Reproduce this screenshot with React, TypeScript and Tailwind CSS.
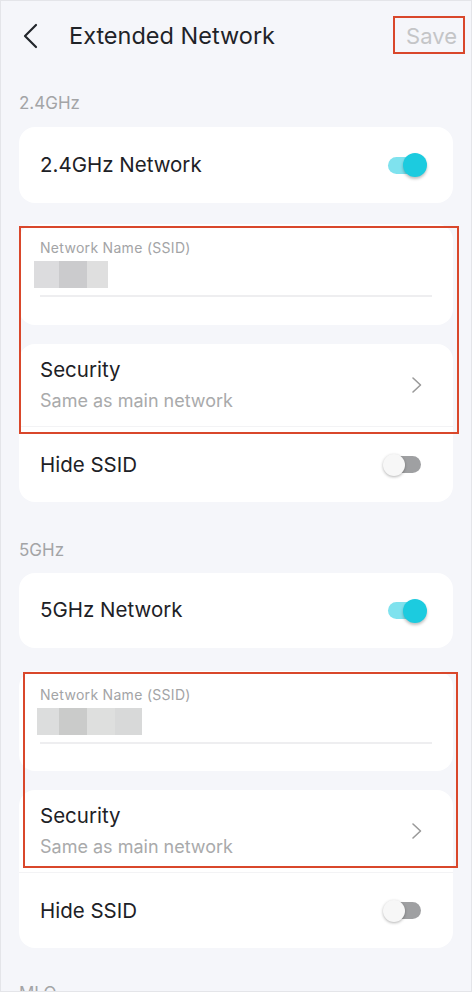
import React from "react";

const font = { fontFamily: "Inter, 'Noto Sans', sans-serif" };

type Block = { w: number; color: string };

function Toggle({ on }: { on: boolean }) {
  if (on) {
    return (
      <div className="relative w-[40px] h-[24px] flex items-center">
        <div className="absolute left-[1px] w-[34px] h-[17px] rounded-full bg-[#7fe2ee]" />
        <div className="absolute right-0 w-[24px] h-[24px] rounded-full bg-[#1ccbdf] shadow-[0_2px_3px_rgba(0,0,0,0.25)]" />
      </div>
    );
  }
  return (
    <div className="relative w-[38px] h-[24px] flex items-center">
      <div className="absolute right-0 w-[32px] h-[17px] rounded-full bg-[#9fa0a2]" />
      <div className="absolute left-0 w-[22px] h-[22px] rounded-full bg-[#f7f7f7] shadow-[0_1px_3px_rgba(0,0,0,0.3)]" />
    </div>
  );
}

function Chevron() {
  return (
    <svg width="12" height="18" viewBox="0 0 12 18" fill="none">
      <path d="M2 2l7.5 7L2 16" stroke="#9a9a9a" strokeWidth="1.6" strokeLinecap="round" strokeLinejoin="round" />
    </svg>
  );
}

function SwitchCard({ label, className }: { label: string; className: string }) {
  return (
    <div className={`mx-[18px] bg-white rounded-2xl flex items-center justify-between pl-[21px] pr-[26px] ${className}`}>
      <span className="text-[20.5px] text-[#1d2126]">{label}</span>
      <Toggle on />
    </div>
  );
}

// ssid value is masked with grey blocks
function SsidCard({ blocks, offset, className }: { blocks: Block[]; offset: string; className: string }) {
  return (
    <div className={`mx-[18px] bg-white rounded-2xl px-[21px] pt-[15px] ${className}`}>
      <div className="text-[14px] tracking-[0.3px] text-[#a3a4a6] leading-[18px]">Network Name (SSID)</div>
      <div className={`flex mt-[4px] h-[27px] ${offset}`}>
        {blocks.map((b, i) => (
          <div key={i} className={`h-full ${b.color}`} style={{ width: b.w }} />
        ))}
      </div>
      <div className="mt-[7px] h-[2px] bg-[#eeeef0]" />
    </div>
  );
}

function SecurityCard({ className }: { className: string }) {
  return (
    <div className={`mx-[18px] bg-white rounded-2xl ${className}`}>
      <div className="h-[83px] flex items-center justify-between pl-[21px] pr-[30px] border-b border-[#f3f3f5]">
        <div>
          <div className="text-[20.5px] text-[#1d2126] leading-[28px]">Security</div>
          <div className="text-[18px] text-[#a9aaab] leading-[26px] mt-[4px]">Same as main network</div>
        </div>
        <Chevron />
      </div>
      <div className="h-[75px] flex items-center justify-between pl-[21px] pr-[32px]">
        <span className="text-[20.5px] text-[#1d2126] mt-[2px]">Hide SSID</span>
        <Toggle on={false} />
      </div>
    </div>
  );
}

export default function App() {
  return (
    <div
      className="relative w-[472px] h-[992px] overflow-hidden bg-[#f5f6fa] border border-[#e4e5e9]"
      style={font}
    >
      {/* header */}
      <div className="h-[70px] flex items-center pl-[21px] pr-[14px]">
        <svg width="18" height="26" viewBox="0 0 18 26" fill="none">
          <path d="M14 2L3 13l11 11" stroke="#22262b" strokeWidth="2.2" strokeLinecap="round" strokeLinejoin="round" />
        </svg>
        <h1 className="ml-[29px] text-[23.5px] text-[#1f2328]">Extended Network</h1>
        <span className="ml-auto text-[22px] text-[#c4c5c7]">Save</span>
      </div>

      <div className="mt-[20px] pl-[18px] text-[17px] text-[#a3a4a6] leading-[24px]">2.4GHz</div>
      <SwitchCard label="2.4GHz Network" className="mt-[12px] h-[76px]" />
      <SsidCard
        blocks={[
          { w: 25, color: "bg-[#dcdcde]" },
          { w: 28, color: "bg-[#cbcbcd]" },
          { w: 21, color: "bg-[#dfdfdf]" },
        ]}
        offset="-ml-[6px]"
        className="mt-[21px] h-[101px]"
      />
      <SecurityCard className="mt-[19px]" />

      <div className="mt-[36px] pl-[18px] text-[17px] text-[#a3a4a6] leading-[24px]">5GHz</div>
      <SwitchCard label="5GHz Network" className="mt-[11px] h-[75px]" />
      <SsidCard
        blocks={[
          { w: 22, color: "bg-[#dcdddd]" },
          { w: 28, color: "bg-[#cacbca]" },
          { w: 28, color: "bg-[#dedfde]" },
          { w: 27, color: "bg-[#d8d9d9]" },
        ]}
        offset="-ml-[3px]"
        className="mt-[23px] h-[100px]"
      />
      <SecurityCard className="mt-[19px]" />

      <div className="mt-[33px] pl-[18px] text-[17px] text-[#a3a4a6] leading-[24px]">MLO</div>

      {/* highlight boxes */}
      <div className="absolute left-[392px] top-[15px] w-[72px] h-[38px] border-2 border-[#d9472b]" />
      <div className="absolute left-[18px] top-[225px] w-[440px] h-[208px] border-2 border-[#d9472b]" />
      <div className="absolute left-[22px] top-[671px] w-[435px] h-[196px] border-2 border-[#d9472b]" />
    </div>
  );
}
